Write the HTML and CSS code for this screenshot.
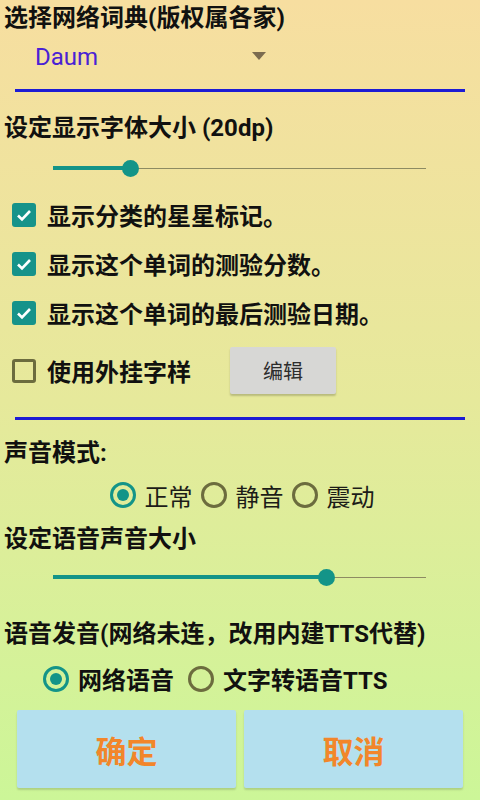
FILE: index.html
```html
<!DOCTYPE html>
<html>
	<head>
		<meta charset="utf-8">
		<title>设置</title>
		<link rel="stylesheet" href="styles.css">
	</head>
	<body>
		<div class="page">
			<!-- 网络词典 -->
			<div class="label">选择网络词典(版权属各家)</div>
			<div class="spinner">
				<span class="spinner-text">Daum</span>
				<svg class="spinner-arrow" width="14" height="8" viewBox="0 0 14 8"><polygon points="0,0 14,0 7,8" fill="#7b6b4f"/></svg>
			</div>
			<div class="rule"></div>

			<!-- 字体大小 -->
			<div class="label label-font">设定显示字体大小 (20dp)</div>
			<div class="slider">
				<div class="slider-fill" style="width: 78px"></div>
				<div class="slider-thumb"></div>
				<div class="slider-rest"></div>
			</div>

			<div class="check-row">
				<span class="check on"><svg width="24" height="24" viewBox="0 0 24 24"><polyline points="6,12.5 10,16.5 18,8" fill="none" stroke="#fff" stroke-width="2.6"/></svg></span>
				<span class="check-text">显示分类的星星标记。</span>
			</div>
			<div class="check-row">
				<span class="check on"><svg width="24" height="24" viewBox="0 0 24 24"><polyline points="6,12.5 10,16.5 18,8" fill="none" stroke="#fff" stroke-width="2.6"/></svg></span>
				<span class="check-text">显示这个单词的测验分数。</span>
			</div>
			<div class="check-row">
				<span class="check on"><svg width="24" height="24" viewBox="0 0 24 24"><polyline points="6,12.5 10,16.5 18,8" fill="none" stroke="#fff" stroke-width="2.6"/></svg></span>
				<span class="check-text">显示这个单词的最后测验日期。</span>
			</div>
			<div class="check-row check-row-font">
				<span class="check"></span>
				<span class="check-text">使用外挂字样</span>
				<button class="edit-btn">编辑</button>
			</div>
			<div class="rule rule-2"></div>

			<!-- 声音 -->
			<div class="label label-sound">声音模式:</div>
			<div class="radio-row radio-row-sound">
				<span class="radio on"></span><span class="radio-text">正常</span>
				<span class="radio"></span><span class="radio-text">静音</span>
				<span class="radio"></span><span class="radio-text">震动</span>
			</div>
			<div class="label label-volume">设定语音声音大小</div>
			<div class="slider slider-volume">
				<div class="slider-fill" style="width: 274px"></div>
				<div class="slider-thumb"></div>
				<div class="slider-rest"></div>
			</div>

			<div class="label label-voice">语音发音(网络未连，改用内建TTS代替)</div>
			<div class="radio-row radio-row-voice">
				<span class="radio on"></span><span class="radio-text bold">网络语音</span>
				<span class="radio"></span><span class="radio-text bold">文字转语音TTS</span>
			</div>

			<div class="actions">
				<button class="action-btn">确定</button>
				<button class="action-btn">取消</button>
			</div>
		</div>
	</body>
</html>
```

FILE: styles.css
```css
*{
	margin: 0;
	padding: 0;
	box-sizing: border-box;
}

body{
	font-family: Roboto, "Noto Sans CJK SC", sans-serif;
	color: #111110;
	background: linear-gradient(#f7dea0, #e6e99b 50%, #ccf698);
	min-height: 800px;
}

.page{
	height: 800px;
	overflow: hidden;
}

/* 标题文字 */
.label{
	font-size: 24px;
	font-weight: 700;
	line-height: 36px;
	padding-left: 4px;
}
.label-font{
	margin-top: 18px;
}
.label-sound{
	margin-top: 15px;
}
.label-volume{
	margin-top: 2px;
}
.label-voice{
	margin-top: 19px;
}

/* 下拉框 */
.spinner{
	height: 53px;
	display: flex;
	align-items: center;
	padding: 0 0 11px 35px;
}
.spinner-text{
	font-size: 24px;
	color: #4a22d4;
	width: 217px;
}
.spinner-arrow{
	display: block;
	margin-top: -2px;
}

/* 蓝色分隔线 */
.rule{
	height: 3px;
	margin: 0 15px;
	background-color: #1c1cd4;
}
.rule-2{
	margin-top: 13px;
}

/* 滑块 */
.slider{
	height: 44px;
	display: flex;
	align-items: center;
	padding: 0 54px 0 53px;
}
.slider-volume{
	height: 40px;
}
.slider-fill{
	height: 4px;
	background-color: #139488;
}
.slider-thumb{
	width: 17px;
	height: 17px;
	border-radius: 50%;
	background-color: #139488;
	margin: 0 -8px 0 -9px;
	position: relative;
	z-index: 1;
}
.slider-rest{
	flex: 1;
	height: 1px;
	background-color: #8d8b62;
}

/* 复选框 */
.check-row{
	height: 49px;
	display: flex;
	align-items: center;
	padding-left: 12px;
}
.check-row-font{
	height: 67px;
}
.check{
	width: 24px;
	height: 24px;
	border-radius: 3px;
	border: 3px solid #6c6c3e;
	display: flex;
	align-items: center;
	justify-content: center;
}
.check.on{
	border: none;
	background-color: #16938a;
}
.check-text{
	font-size: 24px;
	font-weight: 700;
	margin-left: 11px;
}
.edit-btn{
	margin-left: 39px;
	width: 106px;
	height: 47px;
	border: none;
	border-radius: 2px;
	background-color: #d7d7d5;
	box-shadow: 0 2px 2px rgba(0, 0, 0, 0.2);
	font-family: Roboto, "Noto Sans CJK SC", sans-serif;
	font-size: 20px;
	color: #2c2c2c;
}

/* 单选框 */
.radio-row{
	display: flex;
	align-items: center;
}
.radio-row-sound{
	height: 48px;
	justify-content: center;
	padding-left: 12px;
}
.radio-row-voice{
	height: 49px;
	margin-top: 2px;
	padding-left: 43px;
}
.radio{
	width: 26px;
	height: 26px;
	border-radius: 50%;
	border: 3px solid #6c6c3e;
	display: flex;
	align-items: center;
	justify-content: center;
}
.radio.on{
	border-color: #139488;
}
.radio.on::after{
	content: "";
	width: 12px;
	height: 12px;
	border-radius: 50%;
	background-color: #139488;
}
.radio-text{
	font-size: 24px;
	margin: 0 8px 0 9px;
	color: #1c1c18;
}
.radio-text.bold{
	font-weight: 700;
	margin-right: 14px;
	color: #111110;
}

/* 底部按钮 */
.actions{
	display: flex;
	gap: 8px;
	padding: 0 17px;
	margin-top: 7px;
}
.action-btn{
	flex: 1;
	height: 78px;
	border: none;
	border-radius: 2px;
	background-color: #b4e0ee;
	box-shadow: 0 2px 2px rgba(0, 0, 0, 0.15);
	font-family: Roboto, "Noto Sans CJK SC", sans-serif;
	font-size: 31px;
	font-weight: 700;
	color: #f2862a;
}
```
